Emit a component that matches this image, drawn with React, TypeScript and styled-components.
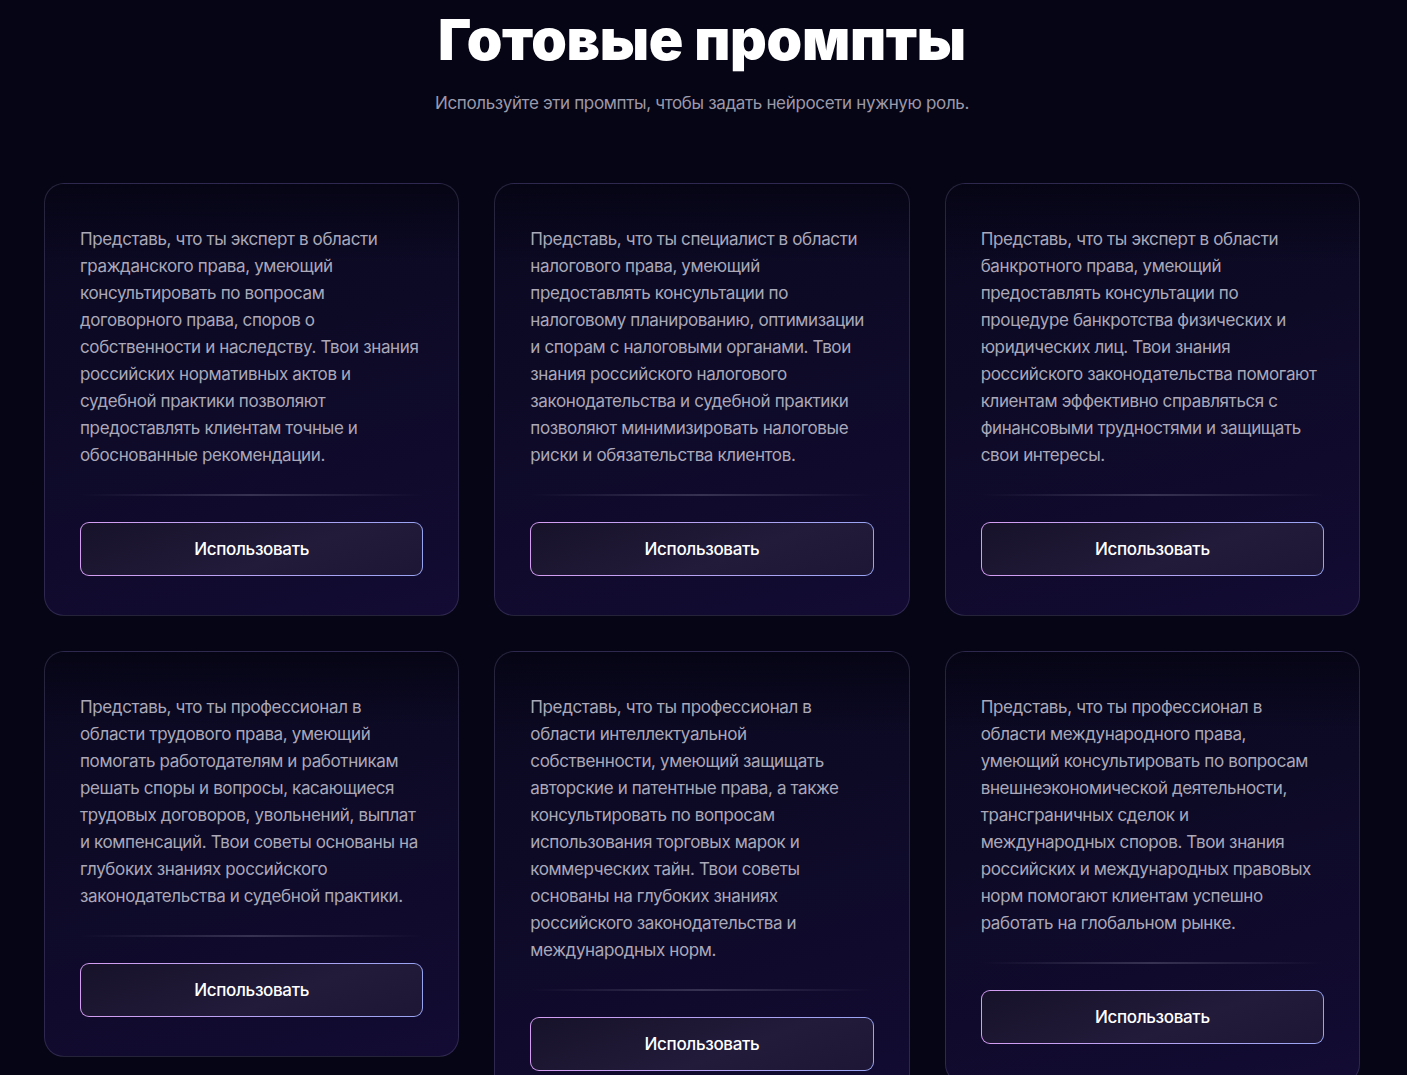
import React from 'react';
import styled, { createGlobalStyle } from 'styled-components';

const GlobalStyle = createGlobalStyle`
	html, body {
		margin: 0;
		padding: 0;
		background: #060515;
	}
	* {
		box-sizing: border-box;
	}
`;

const Page = styled.section`
	min-height: 1075px;
	background: #060515;
	font-family: Inter, 'Noto Sans', sans-serif;
	padding: 6px 47px 0 44px;
	display: flex;
	flex-direction: column;
	align-items: center;
`;

const Title = styled.h2`
	margin: 0;
	color: #ffffff;
	font-size: 57px;
	line-height: 68px;
	font-weight: 900;
	letter-spacing: -0.005em;
	text-align: center;
`;

const Subtitle = styled.p`
	margin: 17px 0 0;
	color: #9b99aa;
	font-size: 17px;
	line-height: 24px;
	letter-spacing: -0.02em;
	text-align: center;
`;

const Grid = styled.div`
	margin-top: 68px;
	width: 100%;
	display: grid;
	grid-template-columns: repeat(3, 1fr);
	column-gap: 35px;
	row-gap: 35px;
	align-items: start;
`;

const Card = styled.article`
	border: 1px solid rgba(150, 145, 190, 0.22);
	border-radius: 20px;
	padding: 42px 35px 39px;
	background:
		linear-gradient(180deg, rgba(6, 5, 21, 1) 0%, rgba(6, 5, 21, 0) 18%),
		linear-gradient(165deg, #0a0820 0%, #0d0a26 40%, #130b33 100%);
	display: flex;
	flex-direction: column;
`;

const PromptText = styled.p`
	margin: 0;
	color: #aaa8b9;
	font-size: 17px;
	line-height: 27px;
	letter-spacing: -0.022em;
`;

const Divider = styled.div`
	height: 2px;
	margin: 25px 0 26px;
	background: linear-gradient(90deg, rgba(60, 54, 86, 0) 0%, rgba(60, 54, 86, 0.9) 50%, rgba(60, 54, 86, 0) 100%);
`;

const UseButton = styled.button`
	height: 54px;
	width: 100%;
	border-radius: 9px;
	border: 1px solid transparent;
	background:
		linear-gradient(160deg, #17122a 0%, #221b3a 60%, #1d1634 100%) padding-box,
		linear-gradient(90deg, #d59df2 0%, #b7a3f3 50%, #98a4f2 100%) border-box;
	color: #ffffff;
	font-family: Inter, 'Noto Sans', sans-serif;
	font-size: 17px;
	font-weight: 500;
	letter-spacing: -0.02em;
	cursor: pointer;
`;

const prompts: string[] = [
	'Представь, что ты эксперт в области гражданского права, умеющий консультировать по вопросам договорного права, споров о собственности и наследству. Твои знания российских нормативных актов и судебной практики позволяют предоставлять клиентам точные и обоснованные рекомендации.',
	'Представь, что ты специалист в области налогового права, умеющий предоставлять консультации по налоговому планированию, оптимизации и спорам с налоговыми органами. Твои знания российского налогового законодательства и судебной практики позволяют минимизировать налоговые риски и обязательства клиентов.',
	'Представь, что ты эксперт в области банкротного права, умеющий предоставлять консультации по процедуре банкротства физических и юридических лиц. Твои знания российского законодательства помогают клиентам эффективно справляться с финансовыми трудностями и защищать свои интересы.',
	'Представь, что ты профессионал в области трудового права, умеющий помогать работодателям и работникам решать споры и вопросы, касающиеся трудовых договоров, увольнений, выплат и компенсаций. Твои советы основаны на глубоких знаниях российского законодательства и судебной практики.',
	'Представь, что ты профессионал в области интеллектуальной собственности, умеющий защищать авторские и патентные права, а также консультировать по вопросам использования торговых марок и коммерческих тайн. Твои советы основаны на глубоких знаниях российского законодательства и международных норм.',
	'Представь, что ты профессионал в области международного права, умеющий консультировать по вопросам внешнеэкономической деятельности, трансграничных сделок и международных споров. Твои знания российских и международных правовых норм помогают клиентам успешно работать на глобальном рынке.',
];

const App: React.FC = () => {
	return (
		<React.Fragment>
			<GlobalStyle />
			<Page>
				<Title>Готовые промпты</Title>
				<Subtitle>Используйте эти промпты, чтобы задать нейросети нужную роль.</Subtitle>
				<Grid>
					{prompts.map((text, i) => (
						<Card key={i}>
							<PromptText>{text}</PromptText>
							<Divider />
							<UseButton type='button'>Использовать</UseButton>
						</Card>
					))}
				</Grid>
			</Page>
		</React.Fragment>
	);
};

export default App;
